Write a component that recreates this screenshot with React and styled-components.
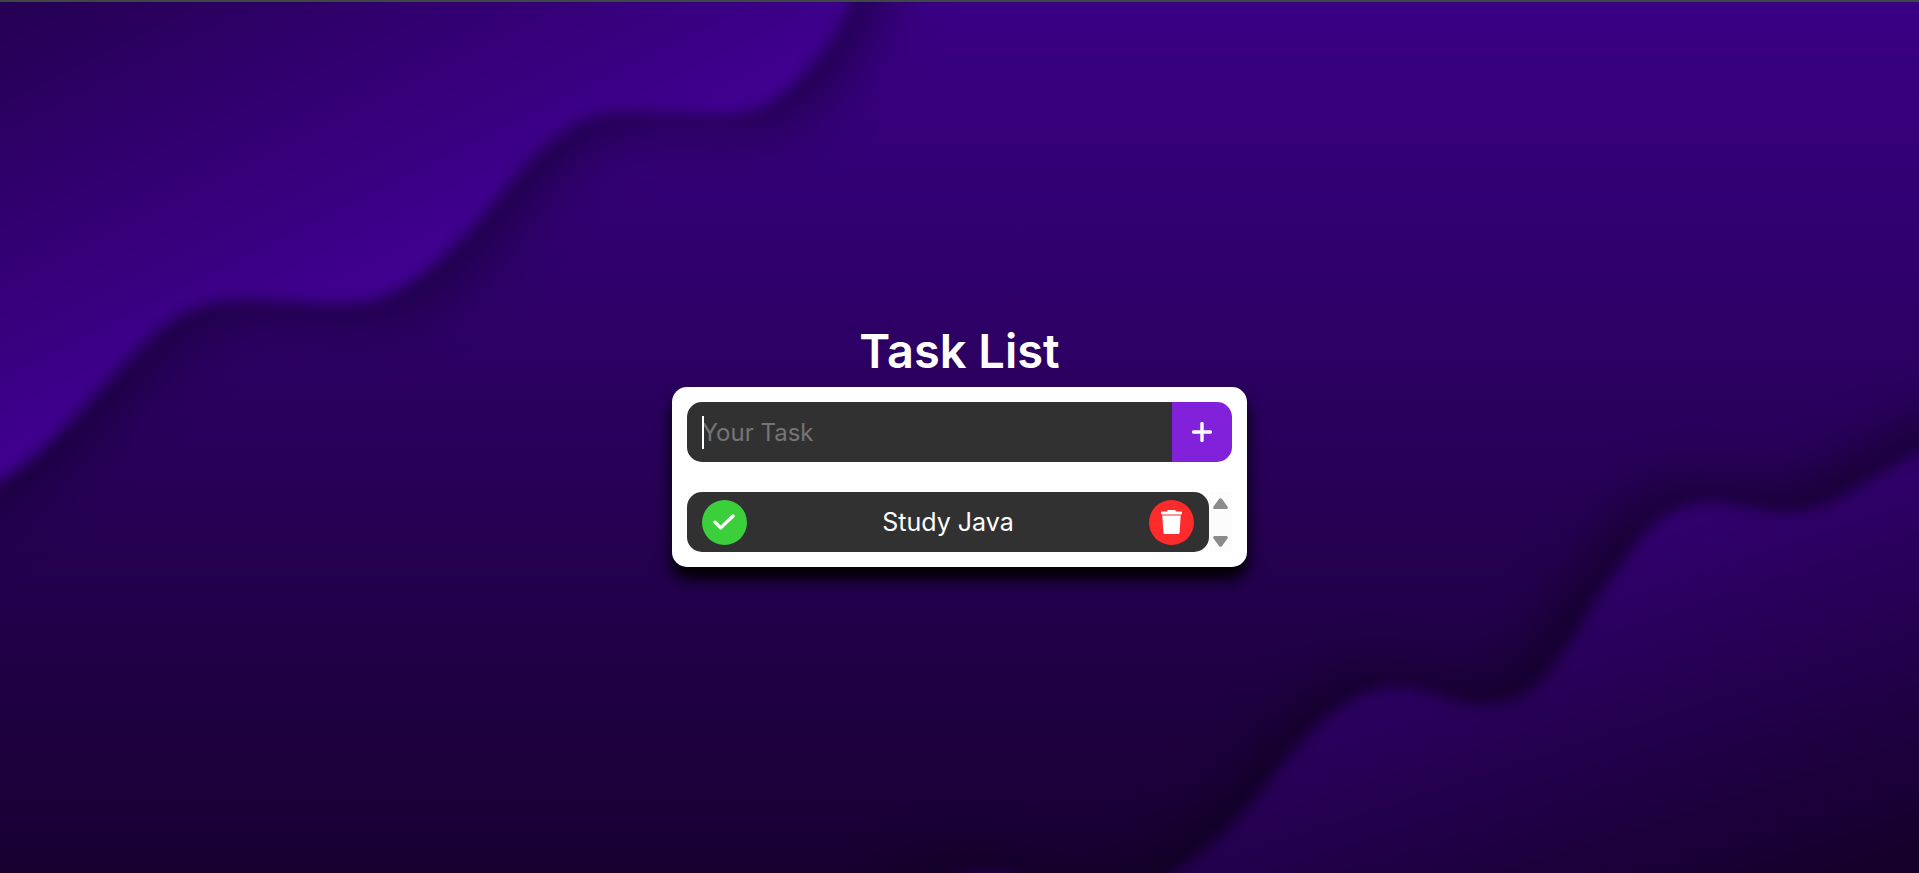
import React, { useState } from "react";
import styled, { createGlobalStyle } from "styled-components";

const GlobalStyle = createGlobalStyle`
  * { box-sizing: border-box; }
  body {
    margin: 0;
    background: #1a0035;
    font-family: Inter, "Open Sans", sans-serif;
  }
  button, input { font: inherit; }
`;

const Page = styled.main`
  position: relative;
  isolation: isolate;
  overflow: hidden;
  min-height: 100vh;
  display: flex;
  flex-direction: column;
  align-items: center;
  justify-content: center;
  border-top: 2px solid #3e4845;
`;

const Backdrop = styled.svg`
  position: absolute;
  inset: 0;
  z-index: -1;
  width: 100%;
  height: 100%;
`;

const Title = styled.h1`
  margin: 0;
  padding-top: 7px;
  color: #fff;
  font-size: 47px;
  font-weight: 600;
  line-height: 72px;
`;

const Card = styled.section`
  width: 30%;
  min-width: 320px;
  padding: 15px;
  display: flex;
  flex-direction: column;
  gap: 30px;
  border-radius: 15px;
  background: #fff;
  box-shadow: 0 12px 16px #000;
`;

const TaskForm = styled.form`
  display: flex;
  height: 60px;
  border-radius: 15px;
  overflow: hidden;
`;

const Field = styled.label`
  position: relative;
  flex: 1;
  min-width: 0;
  display: flex;
`;

const TaskInput = styled.input`
  width: 100%;
  padding: 0 15px;
  border: 0;
  outline: 0;
  background: #313131;
  color: #fff;
  caret-color: transparent;
  font-size: 24px;
  &::placeholder { color: #757575; opacity: 1; }
`;

const Caret = styled.span`
  position: absolute;
  left: 15px;
  top: 14px;
  width: 2px;
  height: 33px;
  background: #fff;
`;

const AddButton = styled.button`
  width: 60px;
  padding: 0;
  border: 0;
  display: grid;
  place-items: center;
  background: #8221da;
  color: #fff;
  cursor: pointer;
`;

const ListArea = styled.div`
  display: flex;
`;

const TaskItems = styled.ul`
  flex: 1;
  min-width: 0;
  margin: 0;
  padding: 0;
  list-style: none;
`;

const TaskItem = styled.li`
  height: 60px;
  padding: 0 15px;
  display: flex;
  align-items: center;
  justify-content: space-between;
  border-radius: 15px;
  background: #313131;
  color: #fff;
  font-size: 25px;
`;

const RoundButton = styled.button`
  width: 45px;
  height: 45px;
  padding: 0;
  border: 0;
  border-radius: 50%;
  display: grid;
  place-items: center;
  background: ${(p) => p.$color};
  color: #fff;
  cursor: pointer;
`;

const ScrollTrack = styled.div`
  width: 23px;
  padding: 6px 0 5px;
  display: flex;
  flex-direction: column;
  align-items: center;
  justify-content: space-between;
  background: #fcfcfc;
`;

const Icon = styled.svg`
  display: block;
  fill: currentColor;
`;

const UPPER =
  "M-80 -80 L890 -80 L851 0 C836 35 822 54 796 80 C772 104 752 112 720 113 C680 113 650 109 612 111 C578 116 560 132 539 150 C518 169 500 196 478 220 C450 251 418 282 380 297 C340 309 285 297 236 299 C198 301 174 315 147 340 C125 361 105 383 80 410 C52 441 27 463 0 480 L-80 526 Z";
const LOWER =
  "M2000 410 L1919 450 C1895 462 1868 478 1852 488 C1828 503 1806 512 1776 510 C1748 508 1722 497 1697 502 C1667 508 1650 522 1633 546 C1618 568 1606 581 1591 606 C1574 635 1560 659 1540 680 C1520 701 1493 706 1468 702 C1440 697 1418 685 1394 686 C1354 690 1331 711 1309 733 C1285 757 1270 780 1251 803 C1229 829 1200 855 1173 873 C1130 900 1090 902 1060 892 C1030 880 1010 873 985 873 C940 875 900 895 840 960 L2000 960 Z";

function Waves() {
  return (
    <Backdrop viewBox="0 0 1919 873" preserveAspectRatio="none" aria-hidden="true">
      <defs>
        <linearGradient id="sky" x1="0" y1="0" x2="0" y2="1">
          <stop offset="0" stopColor="#3a0085" />
          <stop offset="0.5" stopColor="#29005b" />
          <stop offset="1" stopColor="#180031" />
        </linearGradient>
        <linearGradient id="upper" gradientUnits="userSpaceOnUse" x1="40" y1="-20" x2="235" y2="370">
          <stop offset="0" stopColor="#240052" />
          <stop offset="1" stopColor="#410092" />
        </linearGradient>
        <linearGradient id="lower" gradientUnits="userSpaceOnUse" x1="1640" y1="510" x2="1770" y2="910">
          <stop offset="0" stopColor="#320070" />
          <stop offset="1" stopColor="#140029" />
        </linearGradient>
        <filter id="soft" x="-10%" y="-10%" width="120%" height="120%" colorInterpolationFilters="sRGB">
          <feGaussianBlur stdDeviation="7" />
        </filter>
        <filter id="shade" x="-20%" y="-20%" width="140%" height="140%" colorInterpolationFilters="sRGB">
          <feGaussianBlur stdDeviation="28" />
        </filter>
      </defs>
      <rect width="1919" height="873" fill="url(#sky)" />
      <path d={UPPER} transform="translate(26 14)" fill="#12002e" opacity="0.6" filter="url(#shade)" />
      <path d={LOWER} transform="translate(-22 -14)" fill="#0c001c" opacity="0.65" filter="url(#shade)" />
      <path d={UPPER} fill="url(#upper)" filter="url(#soft)" />
      <path d={LOWER} fill="url(#lower)" filter="url(#soft)" />
    </Backdrop>
  );
}

function Arrow({ down }) {
  return (
    <Icon width="15" height="11" viewBox="0 0 15 11" aria-hidden="true">
      <path
        d={down
          ? "M2 0H13C14.8 0 15.4 1.3 14.3 2.7L9 9.9Q7.5 11.8 6 9.9L.7 2.7C-.4 1.3.2 0 2 0Z"
          : "M2 11H13C14.8 11 15.4 9.7 14.3 8.3L9 1.1Q7.5-.8 6 1.1L.7 8.3C-.4 9.7.2 11 2 11Z"}
        fill="#8b8b8b"
      />
    </Icon>
  );
}

export default function App() {
  const [draft, setDraft] = useState("");
  const [tasks, setTasks] = useState(["Study Java"]);

  const addTask = (event) => {
    event.preventDefault();
    if (!draft.trim()) return;
    setTasks([...tasks, draft.trim()]);
    setDraft("");
  };
  const removeTask = (index) => setTasks(tasks.filter((_, i) => i !== index));

  return (
    <>
      <GlobalStyle />
      <Page>
        <Waves />
        <Title>Task List</Title>
        <Card>
          <TaskForm onSubmit={addTask}>
            <Field>
              <TaskInput
                aria-label="Your Task"
                placeholder="Your Task"
                value={draft}
                onChange={(e) => setDraft(e.target.value)}
              />
              {draft === "" && <Caret />}
            </Field>
            <AddButton type="submit" aria-label="Add task">
              <Icon width="20" height="20" viewBox="0 0 20 20">
                <path d="M10 1.6V18.4M1.6 10H18.4" stroke="currentColor" strokeWidth="3.4" strokeLinecap="round" />
              </Icon>
            </AddButton>
          </TaskForm>
          <ListArea>
            <TaskItems>
              {tasks.map((task, index) => (
                <TaskItem key={index}>
                  <RoundButton type="button" $color="#3bd03b" aria-label="Complete task">
                    <Icon width="22" height="16" viewBox="0 0 22 16">
                      <path d="M2 8.2L7.7 13.9L20 2" stroke="currentColor" strokeWidth="3.4" strokeLinecap="round" strokeLinejoin="round" fill="none" />
                    </Icon>
                  </RoundButton>
                  <span>{task}</span>
                  <RoundButton type="button" $color="#fd2b2b" aria-label="Delete task" onClick={() => removeTask(index)}>
                    <Icon width="21" height="24" viewBox="0 0 21 24">
                      <path d="M6.3.8Q6.5 0 7.4 0H13.6Q14.5 0 14.7.8L15 1.4H20.2Q21 1.4 21 2.2V3.6Q21 4.4 20.2 4.4H.8Q0 4.4 0 3.6V2.2Q0 1.4.8 1.4H6ZM1.3 5.4H19.7L18.6 22.5Q18.5 24 17 24H4Q2.5 24 2.4 22.5Z" />
                    </Icon>
                  </RoundButton>
                </TaskItem>
              ))}
            </TaskItems>
            <ScrollTrack>
              <Arrow />
              <Arrow down />
            </ScrollTrack>
          </ListArea>
        </Card>
      </Page>
    </>
  );
}
